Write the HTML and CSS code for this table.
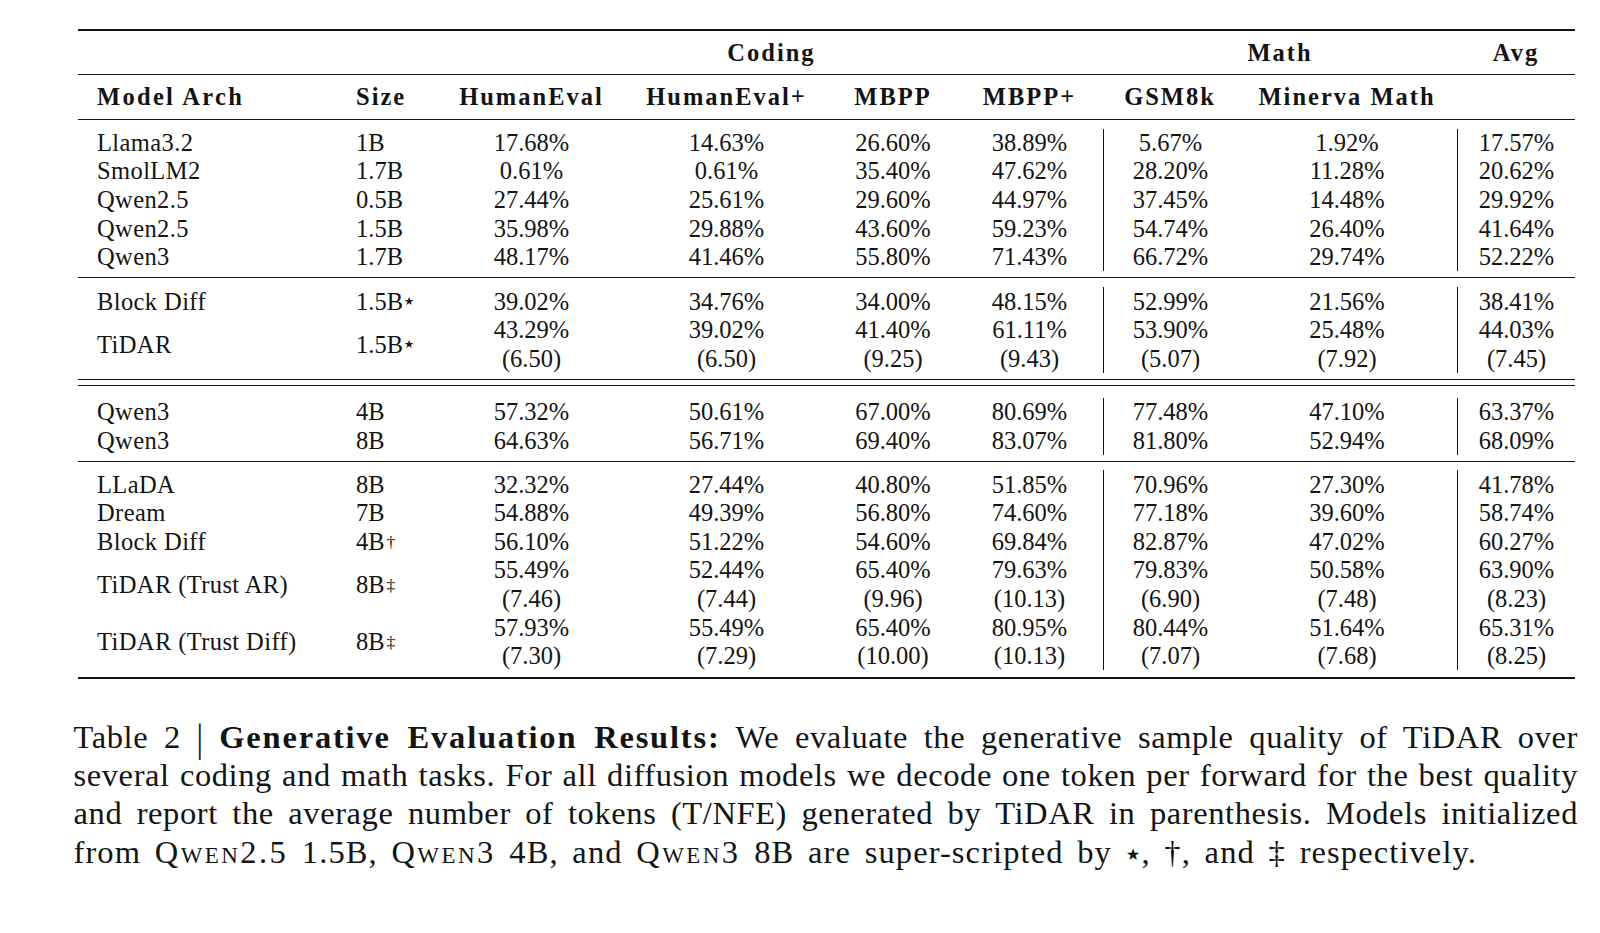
FILE: index.html
```html
<!DOCTYPE html>
<html lang="en">
<head>
<meta charset="utf-8">
<title>Table 2 | Generative Evaluation Results</title>
<link rel="stylesheet" href="styles.css">
</head>
<body>
<div class="page">
  <div class="tbl">
    <div class="grid head1">
      <div class="cell"></div>
      <div class="cell"></div>
      <div class="cell b span4">Coding</div>
      <div class="cell b span2">Math</div>
      <div class="cell b">Avg</div>
    </div>
    <div class="grid head2">
      <div class="cell b l1">Model Arch</div>
      <div class="cell b l2">Size</div>
      <div class="cell b">HumanEval</div>
      <div class="cell b">HumanEval+</div>
      <div class="cell b">MBPP</div>
      <div class="cell b">MBPP+</div>
      <div class="cell b">GSM8k</div>
      <div class="cell b">Minerva Math</div>
      <div class="cell b"></div>
    </div>

    <div class="grid sec s1">
      <div class="cell l1">Llama3.2</div><div class="cell l2">1B</div>
      <div class="cell">17.68%</div><div class="cell">14.63%</div><div class="cell">26.60%</div><div class="cell">38.89%</div>
      <div class="cell vl">5.67%</div><div class="cell">1.92%</div><div class="cell vl">17.57%</div>

      <div class="cell l1">SmolLM2</div><div class="cell l2">1.7B</div>
      <div class="cell">0.61%</div><div class="cell">0.61%</div><div class="cell">35.40%</div><div class="cell">47.62%</div>
      <div class="cell vl">28.20%</div><div class="cell">11.28%</div><div class="cell vl">20.62%</div>

      <div class="cell l1">Qwen2.5</div><div class="cell l2">0.5B</div>
      <div class="cell">27.44%</div><div class="cell">25.61%</div><div class="cell">29.60%</div><div class="cell">44.97%</div>
      <div class="cell vl">37.45%</div><div class="cell">14.48%</div><div class="cell vl">29.92%</div>

      <div class="cell l1">Qwen2.5</div><div class="cell l2">1.5B</div>
      <div class="cell">35.98%</div><div class="cell">29.88%</div><div class="cell">43.60%</div><div class="cell">59.23%</div>
      <div class="cell vl">54.74%</div><div class="cell">26.40%</div><div class="cell vl">41.64%</div>

      <div class="cell l1">Qwen3</div><div class="cell l2">1.7B</div>
      <div class="cell">48.17%</div><div class="cell">41.46%</div><div class="cell">55.80%</div><div class="cell">71.43%</div>
      <div class="cell vl">66.72%</div><div class="cell">29.74%</div><div class="cell vl">52.22%</div>
    </div>

    <div class="grid sec s2">
      <div class="cell l1">Block Diff</div><div class="cell l2">1.5B<sup class="sym star">&#9733;</sup></div>
      <div class="cell">39.02%</div><div class="cell">34.76%</div><div class="cell">34.00%</div><div class="cell">48.15%</div>
      <div class="cell vl">52.99%</div><div class="cell">21.56%</div><div class="cell vl">38.41%</div>

      <div class="cell l1 tall">TiDAR</div><div class="cell l2 tall">1.5B<sup class="sym star">&#9733;</sup></div>
      <div class="cell">43.29%</div><div class="cell">39.02%</div><div class="cell">41.40%</div><div class="cell">61.11%</div>
      <div class="cell vl">53.90%</div><div class="cell">25.48%</div><div class="cell vl">44.03%</div>
      <div class="cell">(6.50)</div><div class="cell">(6.50)</div><div class="cell">(9.25)</div><div class="cell">(9.43)</div>
      <div class="cell vl">(5.07)</div><div class="cell">(7.92)</div><div class="cell vl">(7.45)</div>
    </div>

    <div class="grid sec s3">
      <div class="cell l1">Qwen3</div><div class="cell l2">4B</div>
      <div class="cell">57.32%</div><div class="cell">50.61%</div><div class="cell">67.00%</div><div class="cell">80.69%</div>
      <div class="cell vl">77.48%</div><div class="cell">47.10%</div><div class="cell vl">63.37%</div>

      <div class="cell l1">Qwen3</div><div class="cell l2">8B</div>
      <div class="cell">64.63%</div><div class="cell">56.71%</div><div class="cell">69.40%</div><div class="cell">83.07%</div>
      <div class="cell vl">81.80%</div><div class="cell">52.94%</div><div class="cell vl">68.09%</div>
    </div>

    <div class="grid sec s4">
      <div class="cell l1">LLaDA</div><div class="cell l2">8B</div>
      <div class="cell">32.32%</div><div class="cell">27.44%</div><div class="cell">40.80%</div><div class="cell">51.85%</div>
      <div class="cell vl">70.96%</div><div class="cell">27.30%</div><div class="cell vl">41.78%</div>

      <div class="cell l1">Dream</div><div class="cell l2">7B</div>
      <div class="cell">54.88%</div><div class="cell">49.39%</div><div class="cell">56.80%</div><div class="cell">74.60%</div>
      <div class="cell vl">77.18%</div><div class="cell">39.60%</div><div class="cell vl">58.74%</div>

      <div class="cell l1">Block Diff</div><div class="cell l2">4B<sup class="sym">&#8224;</sup></div>
      <div class="cell">56.10%</div><div class="cell">51.22%</div><div class="cell">54.60%</div><div class="cell">69.84%</div>
      <div class="cell vl">82.87%</div><div class="cell">47.02%</div><div class="cell vl">60.27%</div>

      <div class="cell l1 tall">TiDAR (Trust AR)</div><div class="cell l2 tall">8B<sup class="sym">&#8225;</sup></div>
      <div class="cell">55.49%</div><div class="cell">52.44%</div><div class="cell">65.40%</div><div class="cell">79.63%</div>
      <div class="cell vl">79.83%</div><div class="cell">50.58%</div><div class="cell vl">63.90%</div>
      <div class="cell">(7.46)</div><div class="cell">(7.44)</div><div class="cell">(9.96)</div><div class="cell">(10.13)</div>
      <div class="cell vl">(6.90)</div><div class="cell">(7.48)</div><div class="cell vl">(8.23)</div>

      <div class="cell l1 tall">TiDAR (Trust Diff)</div><div class="cell l2 tall">8B<sup class="sym">&#8225;</sup></div>
      <div class="cell">57.93%</div><div class="cell">55.49%</div><div class="cell">65.40%</div><div class="cell">80.95%</div>
      <div class="cell vl">80.44%</div><div class="cell">51.64%</div><div class="cell vl">65.31%</div>
      <div class="cell">(7.30)</div><div class="cell">(7.29)</div><div class="cell">(10.00)</div><div class="cell">(10.13)</div>
      <div class="cell vl">(7.07)</div><div class="cell">(7.68)</div><div class="cell vl">(8.25)</div>
    </div>
  </div>

  <div class="caption">
    <div class="line">Table 2 <span class="bar">|</span> <b>Generative Evaluation Results:</b> We evaluate the generative sample quality of TiDAR over</div>
    <div class="line">several coding and math tasks. For all diffusion models we decode one token per forward for the best quality</div>
    <div class="line">and report the average number of tokens (T/NFE) generated by TiDAR in parenthesis. Models initialized</div>
    <div class="line last">from <span class="sc">Qwen2.5</span> 1.5B, <span class="sc">Qwen3</span> 4B, and <span class="sc">Qwen3</span> 8B are super-scripted by <span class="cstar">&#9733;</span>, &#8224;, and &#8225; respectively.</div>
  </div>
</div>
</body>
</html>
```

FILE: styles.css
```css
* {
  box-sizing: border-box;
  margin: 0;
  padding: 0;
}

html, body {
  background: #ffffff;
}

body {
  color: #141414;
  font-family: "Liberation Serif", "Times New Roman", serif;
}

.page {
  padding: 29px 0 0 78px;
}

/* ---------- table ---------- */
.tbl {
  width: 1497px;
  border-top: 2px solid #141414;
  border-bottom: 2px solid #141414;
  font-size: 24.5px;
}

.grid {
  display: grid;
  grid-template-columns: 258px 104px 183px 207px 126px 147px 134px 220px 118px;
  grid-auto-rows: 28.6px;
}

.cell {
  display: flex;
  align-items: center;
  justify-content: center;
  white-space: nowrap;
}

.l1 {
  justify-content: flex-start;
  padding-left: 19px;
  letter-spacing: 0.4px;
}

.l2 {
  justify-content: flex-start;
  padding-left: 20px;
}

.b {
  font-weight: 700;
  letter-spacing: 2px;
}

.b.l1 {
  letter-spacing: 2.3px;
}

.span4 { grid-column: span 4; }
.span2 { grid-column: span 2; }

.tall { grid-row: span 2; }

.vl {
  border-left: 1px solid #141414;
}

.head1 {
  grid-auto-rows: 43px;
  border-bottom: 1px solid #141414;
}

.head2 {
  grid-auto-rows: 44px;
  border-bottom: 1px solid #141414;
}

.s1 {
  padding: 8.5px 0 5.5px;
  border-bottom: 1px solid #141414;
}

.s2 {
  padding: 9.5px 0 5.7px;
  border-bottom: 1px solid #141414;
}

.s3 {
  margin-top: 5px;
  border-top: 1px solid #141414;
  padding: 11.7px 0 6.1px;
  border-bottom: 1px solid #141414;
}

.s4 {
  padding: 8.4px 0 6.4px;
}

.sym {
  font-size: 0.72em;
  line-height: 0;
  vertical-align: 0.5em;
  margin-left: 2px;
}

.star {
  font-family: "DejaVu Sans", sans-serif;
  font-size: 0.46em;
  vertical-align: 1.1em;
  margin-left: 1px;
}

/* ---------- caption ---------- */
.caption {
  margin: 39px 0 0 -4.5px;
  width: 1504.5px;
  font-size: 32.5px;
  line-height: 38.3px;
  letter-spacing: 0.6px;
}

.line {
  white-space: nowrap;
  text-align: justify;
  text-align-last: justify;
}

.line.last {
  text-align: left;
  text-align-last: left;
  letter-spacing: 1.1px;
  word-spacing: 4.5px;
}

.caption b {
  letter-spacing: 1.8px;
}

.bar {
  display: inline-block;
  transform: scaleY(1.25);
}

.sc {
  font-variant: small-caps;
  letter-spacing: 2.4px;
}

.cstar {
  font-family: "DejaVu Sans", sans-serif;
  font-size: 0.5em;
  vertical-align: 0.2em;
}
```
